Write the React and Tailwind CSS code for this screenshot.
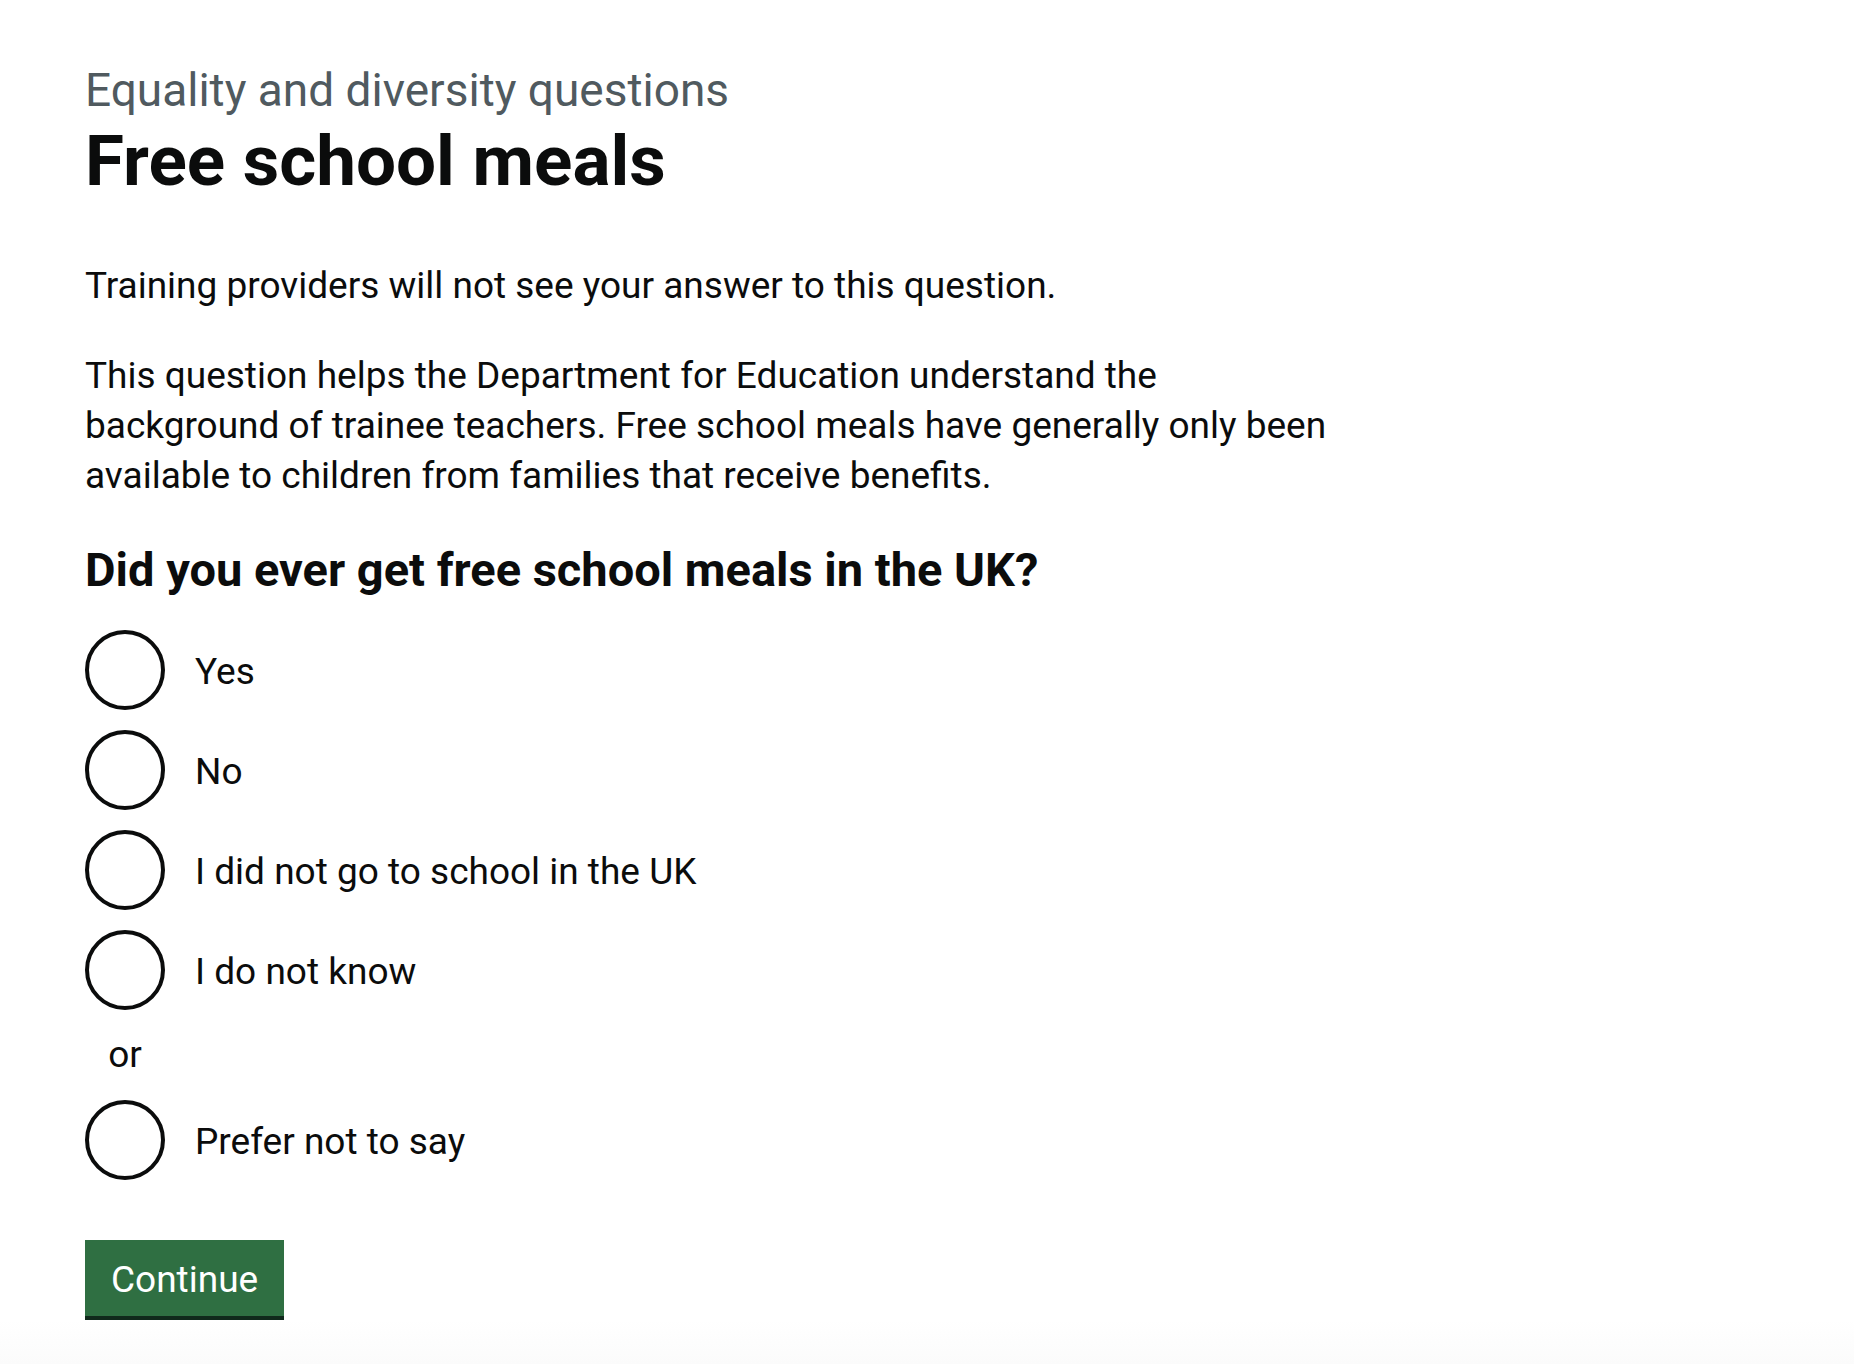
const answers = [
  { id: "yes", label: "Yes" },
  { id: "no", label: "No" },
  { id: "not-uk", label: "I did not go to school in the UK" },
  { id: "unknown", label: "I do not know" },
];

function Radio({ id, label }) {
  return (
    <div className="flex items-center gap-[30px]">
      <input
        type="radio"
        id={id}
        name="free-school-meals"
        value={id}
        className="size-20 shrink-0 appearance-none rounded-full border-4 border-[#0b0c0c] checked:bg-[#0b0c0c] checked:shadow-[inset_0_0_0_16px_white]"
      />
      <label htmlFor={id} className="pt-1">
        {label}
      </label>
    </div>
  );
}

export default function App() {
  return (
    <div className="flex min-h-screen flex-col bg-white font-['Roboto',sans-serif] text-[37px] leading-[50px] text-[#0b0c0c]">
      <main className="px-[85px] pt-[60px]">
        <p className="text-[46px] leading-[60px] text-[#505a5f]">Equality and diversity questions</p>
        <h1 className="text-[71px] leading-[82px] font-bold">Free school meals</h1>
        <div className="mt-[59px] flex max-w-[1250px] flex-col gap-10">
          <p>Training providers will not see your answer to this question.</p>
          <p>
            This question helps the Department for Education understand the background of trainee
            teachers. Free school meals have generally only been available to children from families
            that receive benefits.
          </p>
        </div>
        <form onSubmit={(e) => e.preventDefault()}>
          <fieldset className="mt-[39px]">
            <legend className="mb-[30px] text-[47px] leading-[60px] font-bold">
              <h2>Did you ever get free school meals in the UK?</h2>
            </legend>
            <div className="flex flex-col gap-5">
              {answers.map((a) => (
                <Radio key={a.id} {...a} />
              ))}
              <div className="w-20 text-center">or</div>
              <Radio id="prefer-not" label="Prefer not to say" />
            </div>
          </fieldset>
          <button
            type="submit"
            className="mt-[60px] block border-b-4 border-[#10291b] bg-[#2f6f42] px-[26px] pt-[15px] pb-[11px] text-white"
          >
            Continue
          </button>
        </form>
      </main>
      <div className="h-11 bg-linear-to-b from-white to-[#fbfbfb]" />
    </div>
  );
}
